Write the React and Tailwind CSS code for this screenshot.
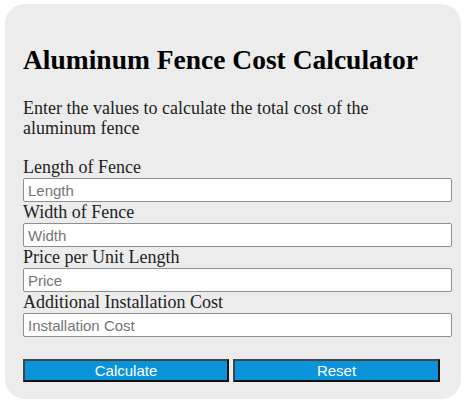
export default function App() {
  const fields = [
    { label: "Length of Fence", ph: "Length" },
    { label: "Width of Fence", ph: "Width" },
    { label: "Price per Unit Length", ph: "Price" },
    { label: "Additional Installation Cost", ph: "Installation Cost" },
  ];
  return (
    <div className="w-[474px] h-[409px] bg-white pt-[4px] pl-[5px]">
      <div className="w-[456px] h-[395px] rounded-[20px] bg-[#ececec] pl-[18px] pt-[41px] font-['Liberation_Serif',serif]">
        <h1 className="text-[27.5px] font-bold leading-[29px] text-black whitespace-nowrap">
          Aluminum Fence Cost Calculator
        </h1>
        <p className="mt-[24px] text-[18px] leading-[20px] text-[#222] w-[400px]">
          Enter the values to calculate the total cost of the aluminum fence
        </p>
        <div className="mt-[19px] flex flex-col">
          {fields.map((f) => (
            <div key={f.label} className="flex flex-col">
              <label className="text-[18px] leading-[21px] text-[#222]">{f.label}</label>
              <input
                type="text"
                placeholder={f.ph}
                className="w-[429px] h-[24px] bg-white border border-[#8f8f8f] rounded-[2px] px-[4px] text-[15px] font-['Liberation_Sans',sans-serif] placeholder:text-[#757575] outline-none"
              />
            </div>
          ))}
        </div>
        <div className="mt-[22px] flex gap-[4px]">
          <button className="w-[206px] h-[23px] bg-[#0a93d8] border-2 border-t-[#444] border-l-[#444] border-b-[#111] border-r-[#111] text-white text-[15px] leading-[17px] font-['Liberation_Sans',sans-serif]">
            Calculate
          </button>
          <button className="w-[207px] h-[23px] bg-[#0a93d8] border-2 border-t-[#444] border-l-[#444] border-b-[#111] border-r-[#111] text-white text-[15px] leading-[17px] font-['Liberation_Sans',sans-serif]">
            Reset
          </button>
        </div>
      </div>
    </div>
  );
}
